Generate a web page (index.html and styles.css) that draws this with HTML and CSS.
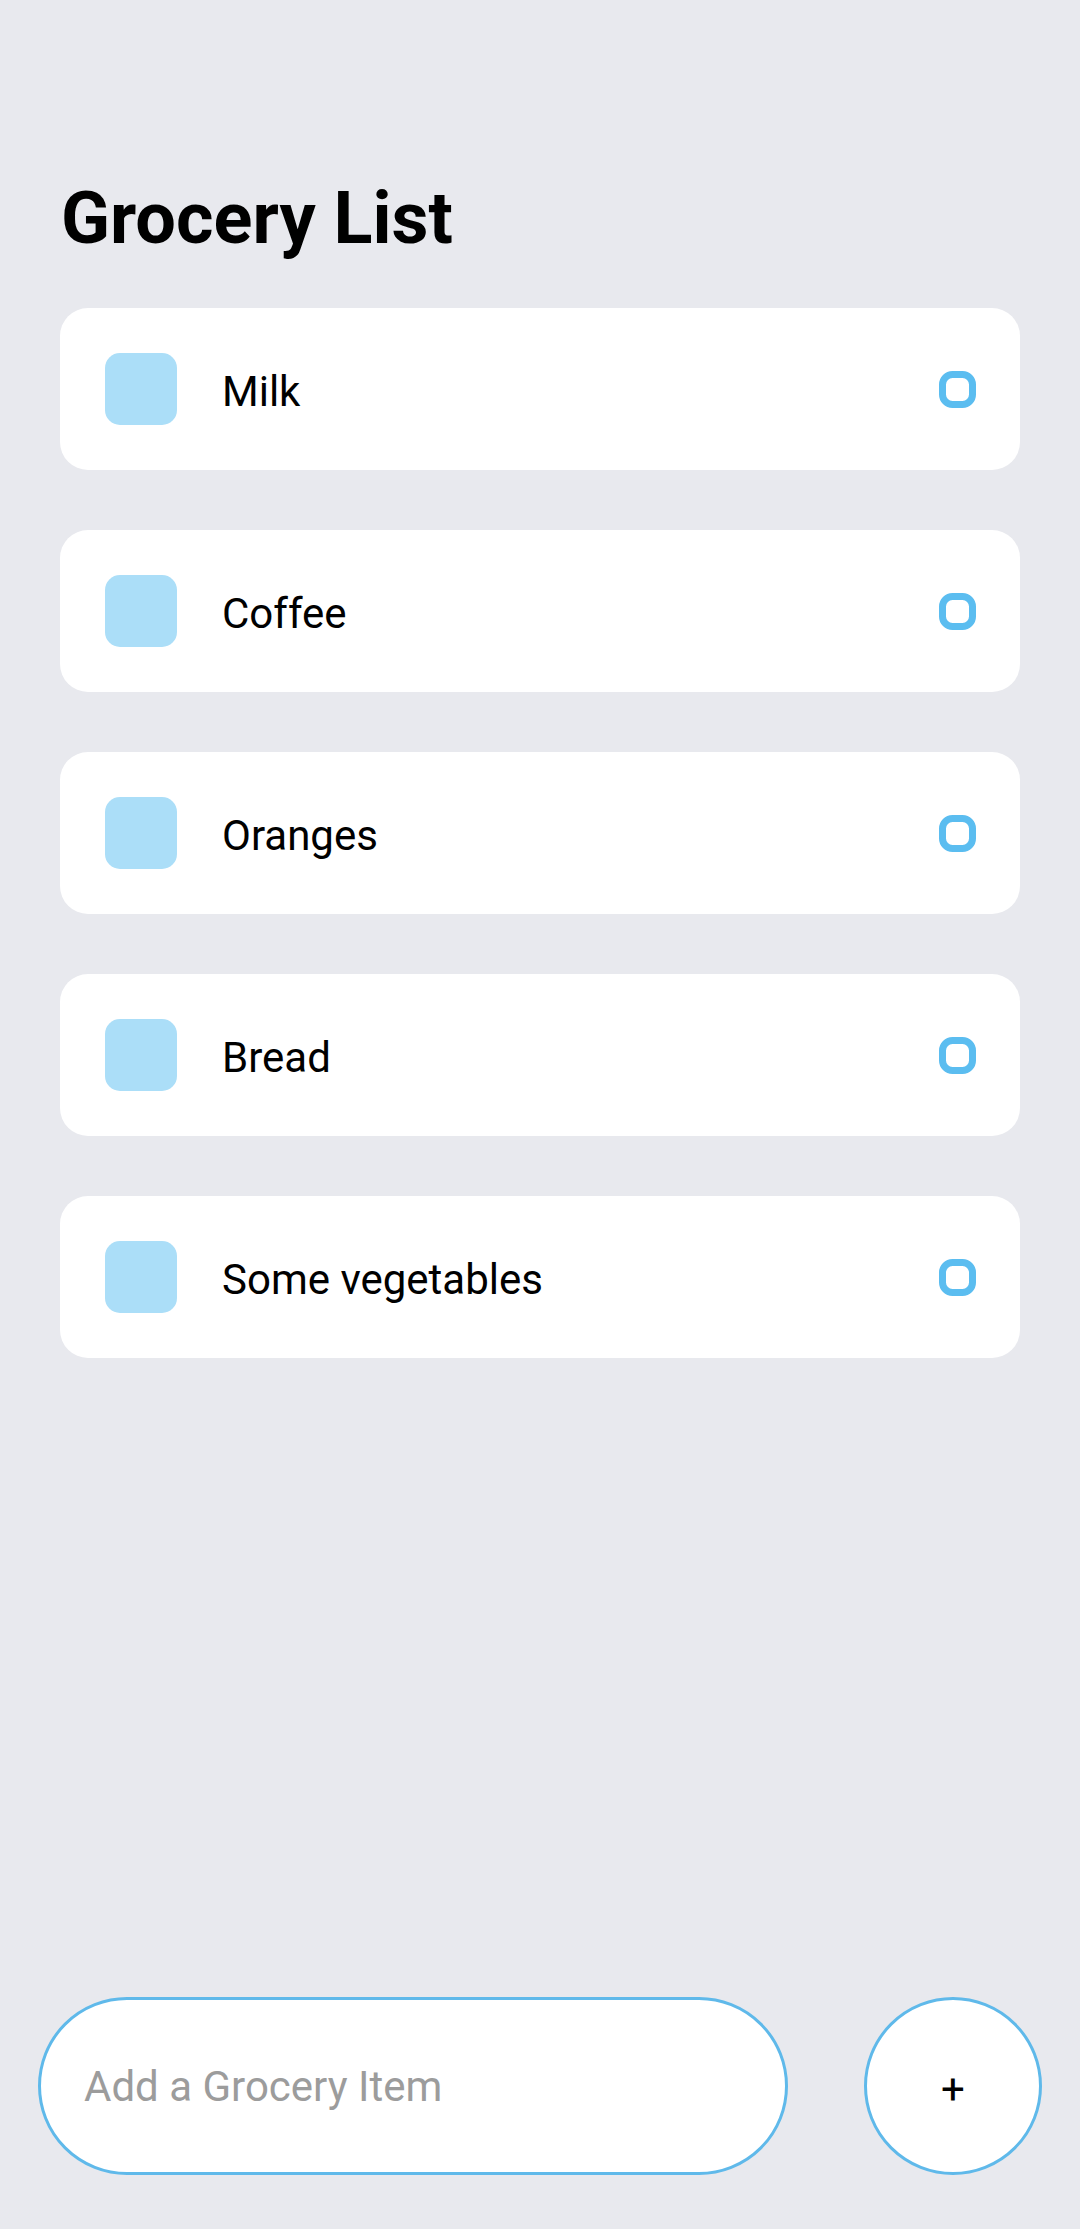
FILE: index.html
```html
<!DOCTYPE html>
<html lang="en">
<head>
<meta charset="utf-8">
<title>Grocery List</title>
<link rel="stylesheet" href="styles.css">
</head>
<body>
<div class="screen">
  <h1 class="title">Grocery List</h1>
  <ul class="list">
    <li class="card">
      <span class="swatch"></span>
      <span class="label">Milk</span>
      <svg class="check" viewBox="0 0 37 37" width="37" height="37"><rect x="3.5" y="3.5" width="30" height="30" rx="10" ry="10" fill="none" stroke="#5bbdf0" stroke-width="7"/></svg>
    </li>
    <li class="card">
      <span class="swatch"></span>
      <span class="label">Coffee</span>
      <svg class="check" viewBox="0 0 37 37" width="37" height="37"><rect x="3.5" y="3.5" width="30" height="30" rx="10" ry="10" fill="none" stroke="#5bbdf0" stroke-width="7"/></svg>
    </li>
    <li class="card">
      <span class="swatch"></span>
      <span class="label">Oranges</span>
      <svg class="check" viewBox="0 0 37 37" width="37" height="37"><rect x="3.5" y="3.5" width="30" height="30" rx="10" ry="10" fill="none" stroke="#5bbdf0" stroke-width="7"/></svg>
    </li>
    <li class="card">
      <span class="swatch"></span>
      <span class="label">Bread</span>
      <svg class="check" viewBox="0 0 37 37" width="37" height="37"><rect x="3.5" y="3.5" width="30" height="30" rx="10" ry="10" fill="none" stroke="#5bbdf0" stroke-width="7"/></svg>
    </li>
    <li class="card">
      <span class="swatch"></span>
      <span class="label">Some vegetables</span>
      <svg class="check" viewBox="0 0 37 37" width="37" height="37"><rect x="3.5" y="3.5" width="30" height="30" rx="10" ry="10" fill="none" stroke="#5bbdf0" stroke-width="7"/></svg>
    </li>
  </ul>
  <div class="composer">
    <input class="field" type="text" placeholder="Add a Grocery Item">
    <button class="add" type="button">+</button>
  </div>
</div>
</body>
</html>
```

FILE: styles.css
```css
* {
  box-sizing: border-box;
}

html, body {
  margin: 0;
  padding: 0;
  background: #e8e9ee;
}

body {
  font-family: Roboto, "Noto Sans", "Liberation Sans", sans-serif;
  color: #000;
}

.screen {
  min-height: 2229px;
  display: flex;
  flex-direction: column;
}

.title {
  margin: 176px 0 0 61px;
  font-size: 72px;
  line-height: 86px;
  font-weight: 700;
  letter-spacing: 0;
}

.list {
  list-style: none;
  margin: 46px 60px 0 60px;
  padding: 0;
  flex: 1;
  display: flex;
  flex-direction: column;
  gap: 60px;
}

.card {
  height: 162px;
  background: #ffffff;
  border-radius: 28px;
  display: flex;
  align-items: center;
  padding: 0 44px 0 45px;
}

.swatch {
  width: 72px;
  height: 72px;
  border-radius: 15px;
  background: #abdef8;
  flex: none;
}

.label {
  flex: 1;
  margin-left: 45px;
  font-size: 42px;
  line-height: 49px;
  padding-top: 4px;
}

.check {
  flex: none;
  display: block;
}

.composer {
  display: flex;
  align-items: center;
  justify-content: space-between;
  padding: 0 38px 54px 38px;
}

.field {
  width: 750px;
  height: 178px;
  border: 3px solid #5fb9ea;
  border-radius: 89px;
  background: #ffffff;
  padding: 0 0 0 43px;
  font-family: Roboto, "Noto Sans", "Liberation Sans", sans-serif;
  font-size: 42px;
  color: #000;
  outline: none;
}

.field::placeholder {
  color: #9c9c9c;
}

.add {
  width: 178px;
  height: 178px;
  border-radius: 50%;
  border: 3px solid #5fb9ea;
  background: #ffffff;
  font-family: Roboto, "Noto Sans", "Liberation Sans", sans-serif;
  font-size: 42px;
  color: #000;
  padding: 6px 0 0 0;
  cursor: pointer;
}
```
